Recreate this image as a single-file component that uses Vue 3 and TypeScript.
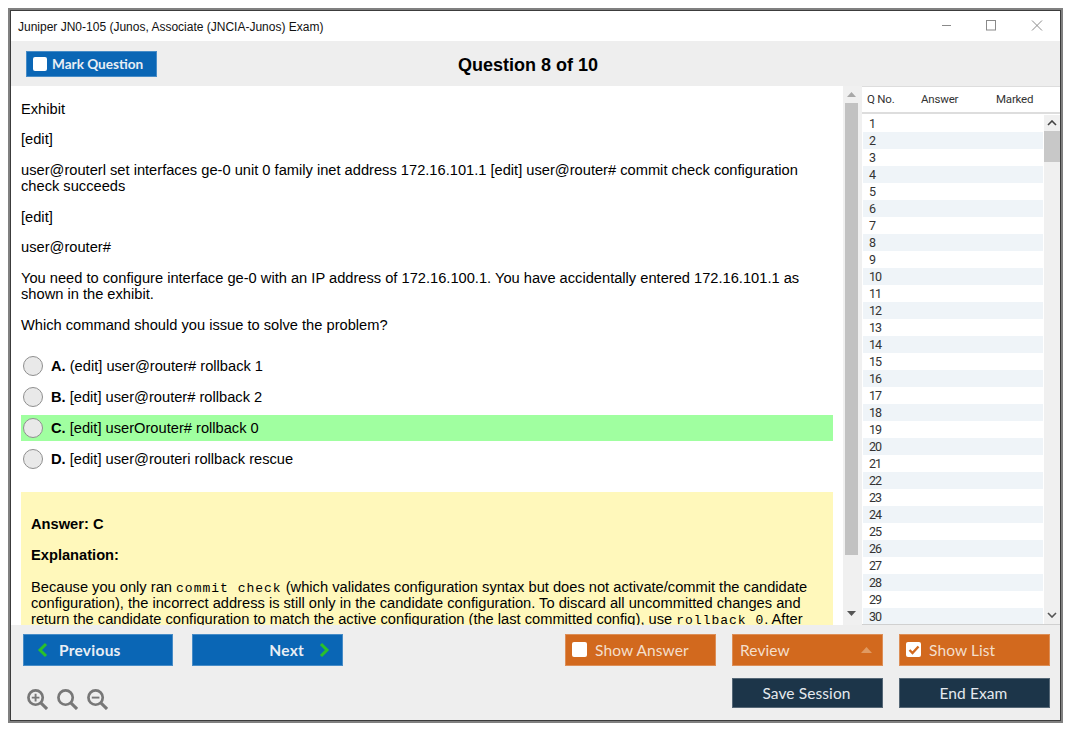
<script setup lang="ts">
const paragraphsTop: string[] = [
  'Exhibit',
  '[edit]',
  'user@routerl set interfaces ge-0 unit 0 family inet address 172.16.101.1 [edit] user@router# commit check configuration check succeeds',
  '[edit]',
  'user@router#',
  'You need to configure interface ge-0 with an IP address of 172.16.100.1. You have accidentally entered 172.16.101.1 as shown in the exhibit.',
  'Which command should you issue to solve the problem?',
]
const options = [
  { key: 'A.', text: '(edit] user@router# rollback 1', correct: false },
  { key: 'B.', text: '[edit] user@router# rollback 2', correct: false },
  { key: 'C.', text: '[edit] userOrouter# rollback 0', correct: true },
  { key: 'D.', text: '[edit] user@routeri rollback rescue', correct: false },
]
const rows = Array.from({ length: 30 }, (_, i) => i + 1)
</script>

<template>
  <div class="page">
    <div class="frame">
      <div class="window">
        <header class="titlebar">
          <span class="title">Juniper JN0-105 (Junos, Associate (JNCIA-Junos) Exam)</span>
          <div class="controls">
            <svg width="12" height="12" viewBox="0 0 12 12"><path d="M3 5.5h9" stroke="#8a8a8a" fill="none" /></svg>
            <svg width="12" height="12" viewBox="0 0 12 12"><rect x="1.5" y="0.5" width="9" height="9.5" stroke="#8a8a8a" fill="none" /></svg>
            <svg width="12" height="12" viewBox="0 0 12 12"><path d="M1 0.5l10 10M11 0.5l-10 10" stroke="#8a8a8a" fill="none" /></svg>
          </div>
        </header>

        <div class="toolbar">
          <button class="btn mark"><span class="box"></span>Mark Question</button>
          <h1 class="qtitle">Question 8 of 10</h1>
        </div>

        <main class="main">
          <section class="content">
            <p v-for="(p, i) in paragraphsTop" :key="i" class="para">{{ p }}</p>
            <div class="options">
              <div v-for="o in options" :key="o.key" class="option" :class="{ correct: o.correct }">
                <span class="radio"></span>
                <span><b>{{ o.key }}</b> {{ o.text }}</span>
              </div>
            </div>
            <div class="answer">
              <p class="para"><b>Answer: C</b></p>
              <p class="para"><b>Explanation:</b></p>
              <p class="para explain">
                Because you only ran <code>commit check</code> (which validates configuration syntax but does not activate/commit the candidate configuration), the incorrect address is still only in the candidate configuration. To discard all uncommitted changes and return the candidate configuration to match the active configuration (the last committed config), use <code>rollback 0</code>. After
              </p>
            </div>
          </section>

          <div class="vscroll">
            <svg class="arrow" width="9" height="5" viewBox="0 0 9 5"><path d="M4.5 0L9 5H0z" fill="#a8a8a8" /></svg>
            <div class="vthumb"></div>
            <svg class="arrow end" width="9" height="5" viewBox="0 0 9 5"><path d="M4.5 5L9 0H0z" fill="#555" /></svg>
          </div>

          <aside class="list">
            <div class="list-head">
              <span class="c1">Q No.</span>
              <span class="c2">Answer</span>
              <span class="c3">Marked</span>
            </div>
            <div class="list-body">
              <div class="rows">
                <div v-for="n in rows" :key="n" class="row" :class="{ alt: n % 2 === 0 }">{{ n }}</div>
              </div>
              <div class="lscroll">
                <svg class="chev" width="10" height="6" viewBox="0 0 10 6"><path d="M1 5l4-4 4 4" stroke="#444" stroke-width="1.6" fill="none" /></svg>
                <div class="lthumb"></div>
                <svg class="chev end" width="10" height="6" viewBox="0 0 10 6"><path d="M1 1l4 4 4-4" stroke="#555" stroke-width="1.6" fill="none" /></svg>
              </div>
            </div>
          </aside>
        </main>

        <footer class="footer">
          <div class="left">
            <div class="navs">
              <button class="btn nav prev">
                <svg width="11" height="16" viewBox="0 0 11 16"><path d="M9 2L3 8l6 6" stroke="#2ac02a" stroke-width="3" fill="none" /></svg>
                Previous
              </button>
              <button class="btn nav next">
                Next
                <svg width="11" height="16" viewBox="0 0 11 16"><path d="M2 2l6 6-6 6" stroke="#2ac02a" stroke-width="3" fill="none" /></svg>
              </button>
            </div>
            <div class="zooms">
              <svg width="21" height="21" viewBox="0 0 22 22"><circle cx="9" cy="9" r="7.5" stroke="#777" stroke-width="2.8" fill="none" /><path d="M14.5 14.5L21 21" stroke="#777" stroke-width="3.2" /><path d="M5 9h8M9 5v8" stroke="#777" stroke-width="2" /></svg>
              <svg width="21" height="21" viewBox="0 0 22 22"><circle cx="9" cy="9" r="7.5" stroke="#777" stroke-width="2.8" fill="none" /><path d="M14.5 14.5L21 21" stroke="#777" stroke-width="3.2" /></svg>
              <svg width="21" height="21" viewBox="0 0 22 22"><circle cx="9" cy="9" r="7.5" stroke="#777" stroke-width="2.8" fill="none" /><path d="M14.5 14.5L21 21" stroke="#777" stroke-width="3.2" /><path d="M5 9h8" stroke="#777" stroke-width="2" /></svg>
            </div>
          </div>
          <div class="actions">
            <button class="btn orange"><span class="box big"></span>Show Answer</button>
            <button class="btn orange review">Review
              <svg width="11" height="6" viewBox="0 0 11 6"><path d="M5.5 0L11 6H0z" fill="#e09a62" /></svg>
            </button>
            <button class="btn orange">
              <span class="box big checked">
                <svg width="12" height="10" viewBox="0 0 12 10"><path d="M1.5 5l3 3 6-6.5" stroke="#d2691e" stroke-width="2.4" fill="none" /></svg>
              </span>Show List
            </button>
            <span class="spacer"></span>
            <button class="btn dark">Save Session</button>
            <button class="btn dark">End Exam</button>
          </div>
        </footer>
      </div>
    </div>
  </div>
</template>

<style>
html, body { margin: 0; background: #fff; }
</style>

<style scoped>
.page { padding: 8px 0 0 8px; height: 727px; box-sizing: border-box; background: #fff; font-family: "Liberation Sans", Arial, sans-serif; color: #000; }
.frame { width: 1055px; height: 715px; box-sizing: border-box; border: 2px solid #808080; }
.window { height: 100%; box-sizing: border-box; border: 1px solid #3c3c3c; background: #fff; display: flex; flex-direction: column; overflow: hidden; }
.titlebar { height: 30px; flex: none; display: flex; align-items: center; justify-content: space-between; padding-left: 7px; background: #fff; }
.title { font-size: 12px; color: #111; margin-top: 2px; }
.controls { display: flex; gap: 34px; padding-right: 17px; align-items: center; }
.toolbar { height: 45px; flex: none; background: #eee; display: flex; align-items: center; padding: 0 161px 0 15px; box-sizing: border-box; }
.qtitle { flex: 1; margin: 3px 0 0; text-align: center; font-size: 18px; font-weight: 700; }
.btn { font-family: Lato, "Open Sans", sans-serif; border: 1px solid rgba(255,255,255,.25); padding: 0; margin: 0; color: #e8eef4; display: flex; align-items: center; box-sizing: border-box; }
.mark { width: 131px; height: 26px; background: #0a66b5; font-size: 13.6px; font-weight: 700; padding-left: 6px; gap: 5px; margin-top: 1px; }
.box { width: 14px; height: 14px; background: #fff; border-radius: 2px; display: inline-flex; align-items: center; justify-content: center; }
.box.big { width: 15px; height: 15px; margin-right: 8px; }
.main { height: 539px; flex: none; display: flex; background: #fff; overflow: hidden; }
.content { width: 832px; flex: none; box-sizing: border-box; padding: 14.7px 10px 0 10px; font-size: 14.67px; line-height: 16px; overflow: hidden; }
.para { margin: 0 0 14.67px; }
.options { margin-top: 20.3px; display: flex; flex-direction: column; gap: 5px; }
.option { height: 26px; display: flex; align-items: center; gap: 8px; padding-left: 2px; }
.option.correct { background: #a0ffa0; }
.radio { width: 18px; height: 18px; border-radius: 50%; background: #e9e9e9; border: 1px solid #8f8f8f; flex: none; }
.answer { margin-top: 20px; background: #fff8bb; padding: 24px 10px 10px; }
.explain { margin-top: 16.67px; }
code { font-family: "Liberation Mono", monospace; font-size: 13px; letter-spacing: 1px; line-height: 0; }
.vscroll { width: 19px; flex: none; background: #f0f0f0; display: flex; flex-direction: column; align-items: flex-start; padding-left: 2px; box-sizing: border-box; }
.vscroll .arrow { margin: 6px 0 0 2px; }
.vscroll .arrow.end { margin-top: auto; margin-bottom: 9px; }
.vthumb { width: 13px; height: 452px; margin-top: 6px; background: #c2c2c2; }
.list { flex: 1; display: flex; flex-direction: column; background: #fff; color: #333; min-width: 0; }
.list-head { height: 26px; flex: none; box-sizing: border-box; border-top: 1px solid #ddd; padding-bottom: 2px; display: flex; align-items: center; font-family: Roboto, sans-serif; font-size: 11.5px; letter-spacing: -.2px; }
.c1 { margin-left: 5px; width: 54px; }
.c2 { width: 75px; }
.list-body { flex: 1; display: flex; border-top: 2px solid #ddd; border-bottom: 1px solid #d0d0d0; padding: 1px 0 0 1px; min-height: 0; overflow: hidden; }
.rows { width: 180px; flex: none; margin-right: 1px; }
.row { height: 17px; line-height: 17px; padding-left: 6px; font-family: Roboto, sans-serif; font-size: 12.5px; letter-spacing: -1px; }
.row.alt { background: #eff4f8; }
.lscroll { flex: 1; background: #f0f0f0; display: flex; flex-direction: column; align-items: center; }
.chev { margin-top: 5px; }
.chev.end { margin-top: auto; margin-bottom: 6px; }
.lthumb { width: 100%; height: 31px; margin-top: 5px; background: #c8c8c8; }
.footer { flex: 1; background: #eee; display: flex; justify-content: space-between; padding: 9px 10px 0 12px; min-height: 0; }
.navs { display: flex; gap: 19px; }
.nav { height: 32px; background: #0a66b5; font-size: 15.5px; font-weight: 700; letter-spacing: .25px; }
.prev { width: 150px; padding-left: 13px; gap: 11px; }
.next { width: 151px; justify-content: flex-end; padding-right: 12px; gap: 15px; }
.zooms { display: flex; gap: 9px; margin: 23px 0 0 4px; }
.actions { display: grid; grid-template-columns: 151px 151px 151px; column-gap: 16px; row-gap: 12px; align-content: start; }
.orange { height: 32px; background: #d2691e; font-size: 15.5px; padding: 0 0 1px 6px; letter-spacing: .1px; color: #f4dfcc; }
.review { justify-content: space-between; padding: 0 10px 1px 7px; }
.dark { height: 30px; background: #1c3549; font-size: 15.5px; justify-content: center; padding-right: 2px; color: #e4e9ee; letter-spacing: .1px; }
</style>
